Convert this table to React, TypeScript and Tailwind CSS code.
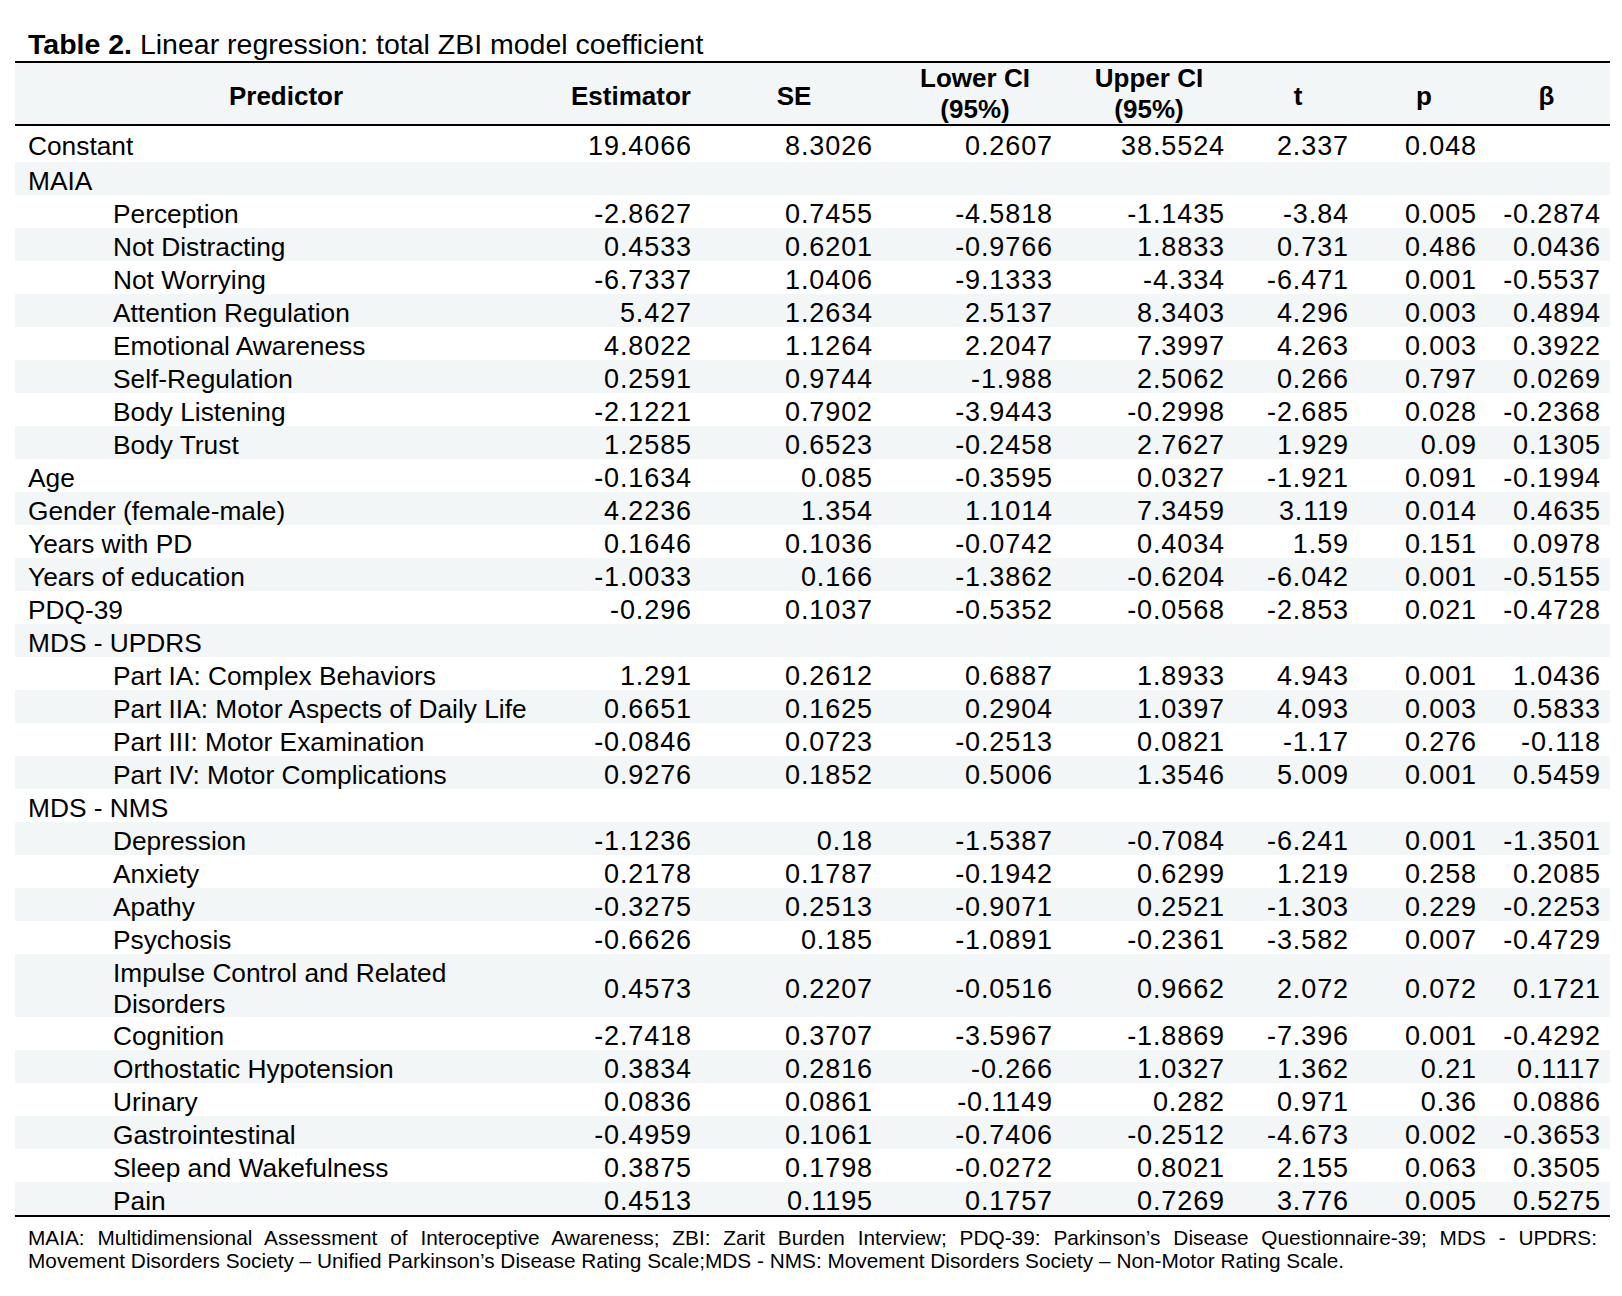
const cols = "grid grid-cols-[542px_148px_178px_184px_164px_134px_118px_127px]"

// right padding per numeric column, so numbers land where the original has them
const pads = ["pr-[13px]", "pr-[10px]", "pr-[14px]", "pr-[6px]", "pr-[16px]", "pr-[6px]", "pr-[9px]"]

type Row = {
  label: string
  indent?: boolean
  values?: string[]
  tall?: boolean
}

const rows: Row[] = [
  { label: "Constant", values: ["19.4066", "8.3026", "0.2607", "38.5524", "2.337", "0.048", ""] },
  { label: "MAIA" },
  { label: "Perception", indent: true, values: ["-2.8627", "0.7455", "-4.5818", "-1.1435", "-3.84", "0.005", "-0.2874"] },
  { label: "Not Distracting", indent: true, values: ["0.4533", "0.6201", "-0.9766", "1.8833", "0.731", "0.486", "0.0436"] },
  { label: "Not Worrying", indent: true, values: ["-6.7337", "1.0406", "-9.1333", "-4.334", "-6.471", "0.001", "-0.5537"] },
  { label: "Attention Regulation", indent: true, values: ["5.427", "1.2634", "2.5137", "8.3403", "4.296", "0.003", "0.4894"] },
  { label: "Emotional Awareness", indent: true, values: ["4.8022", "1.1264", "2.2047", "7.3997", "4.263", "0.003", "0.3922"] },
  { label: "Self-Regulation", indent: true, values: ["0.2591", "0.9744", "-1.988", "2.5062", "0.266", "0.797", "0.0269"] },
  { label: "Body Listening", indent: true, values: ["-2.1221", "0.7902", "-3.9443", "-0.2998", "-2.685", "0.028", "-0.2368"] },
  { label: "Body Trust", indent: true, values: ["1.2585", "0.6523", "-0.2458", "2.7627", "1.929", "0.09", "0.1305"] },
  { label: "Age", values: ["-0.1634", "0.085", "-0.3595", "0.0327", "-1.921", "0.091", "-0.1994"] },
  { label: "Gender (female-male)", values: ["4.2236", "1.354", "1.1014", "7.3459", "3.119", "0.014", "0.4635"] },
  { label: "Years with PD", values: ["0.1646", "0.1036", "-0.0742", "0.4034", "1.59", "0.151", "0.0978"] },
  { label: "Years of education", values: ["-1.0033", "0.166", "-1.3862", "-0.6204", "-6.042", "0.001", "-0.5155"] },
  { label: "PDQ-39", values: ["-0.296", "0.1037", "-0.5352", "-0.0568", "-2.853", "0.021", "-0.4728"] },
  { label: "MDS - UPDRS" },
  { label: "Part IA: Complex Behaviors", indent: true, values: ["1.291", "0.2612", "0.6887", "1.8933", "4.943", "0.001", "1.0436"] },
  { label: "Part IIA: Motor Aspects of Daily Life", indent: true, values: ["0.6651", "0.1625", "0.2904", "1.0397", "4.093", "0.003", "0.5833"] },
  { label: "Part III: Motor Examination", indent: true, values: ["-0.0846", "0.0723", "-0.2513", "0.0821", "-1.17", "0.276", "-0.118"] },
  { label: "Part IV: Motor Complications", indent: true, values: ["0.9276", "0.1852", "0.5006", "1.3546", "5.009", "0.001", "0.5459"] },
  { label: "MDS - NMS" },
  { label: "Depression", indent: true, values: ["-1.1236", "0.18", "-1.5387", "-0.7084", "-6.241", "0.001", "-1.3501"] },
  { label: "Anxiety", indent: true, values: ["0.2178", "0.1787", "-0.1942", "0.6299", "1.219", "0.258", "0.2085"] },
  { label: "Apathy", indent: true, values: ["-0.3275", "0.2513", "-0.9071", "0.2521", "-1.303", "0.229", "-0.2253"] },
  { label: "Psychosis", indent: true, values: ["-0.6626", "0.185", "-1.0891", "-0.2361", "-3.582", "0.007", "-0.4729"] },
  { label: "Impulse Control and Related Disorders", indent: true, tall: true, values: ["0.4573", "0.2207", "-0.0516", "0.9662", "2.072", "0.072", "0.1721"] },
  { label: "Cognition", indent: true, values: ["-2.7418", "0.3707", "-3.5967", "-1.8869", "-7.396", "0.001", "-0.4292"] },
  { label: "Orthostatic Hypotension", indent: true, values: ["0.3834", "0.2816", "-0.266", "1.0327", "1.362", "0.21", "0.1117"] },
  { label: "Urinary", indent: true, values: ["0.0836", "0.0861", "-0.1149", "0.282", "0.971", "0.36", "0.0886"] },
  { label: "Gastrointestinal", indent: true, values: ["-0.4959", "0.1061", "-0.7406", "-0.2512", "-4.673", "0.002", "-0.3653"] },
  { label: "Sleep and Wakefulness", indent: true, values: ["0.3875", "0.1798", "-0.0272", "0.8021", "2.155", "0.063", "0.3505"] },
  { label: "Pain", indent: true, values: ["0.4513", "0.1195", "0.1757", "0.7269", "3.776", "0.005", "0.5275"] },
]

const headers = ["Estimator", "SE", "Lower CI\n(95%)", "Upper CI\n(95%)", "t", "p", "β"]

export default function App() {
  return (
    <div className="w-[1622px] h-[1296px] bg-white text-black px-[15px] pt-[28px] font-['Liberation_Sans',Arial,sans-serif]">
      <h2 className="pl-[13px] text-[28.5px] leading-[33px] whitespace-nowrap">
        <span className="font-bold">Table 2.</span> Linear regression: total ZBI model coefficient
      </h2>

      <div className="w-[1595px]">
        <div className={`${cols} h-[65px] items-center border-y-2 border-black bg-[#f3f6f6] font-bold text-[26px] leading-[31px]`}>
          <div className="text-center pt-[4px]">Predictor</div>
          {headers.map((h) => (
            <div key={h} className={`text-center whitespace-pre-line ${h.includes("\n") ? "" : "pt-[4px]"}`}>
              {h}
            </div>
          ))}
        </div>

        {rows.map((r, i) => (
          <div
            key={r.label}
            className={`${cols} items-center leading-[31px] ${
              r.tall ? "h-[63px]" : i === 0 ? "h-[36px]" : "h-[33px]"
            } ${i % 2 === 1 ? "bg-[#f3f6f6]" : ""}`}
          >
            <div className={`pt-[4px] text-[26.3px] ${r.indent ? "pl-[98px] pr-[10px]" : "pl-[13px]"}`}>{r.label}</div>
            {(r.values ?? ["", "", "", "", "", "", ""]).map((v, j) => (
              <div key={j} className={`text-right pt-[4px] text-[27px] tracking-[0.9px] ${pads[j]}`}>
                {v}
              </div>
            ))}
          </div>
        ))}

        <div className="border-t-2 border-black" />
      </div>

      <div className="pl-[13px] pr-[10px] pt-[9px] text-[20.8px] leading-[23px]">
        <p className="text-justify [text-align-last:justify]">
          MAIA: Multidimensional Assessment of Interoceptive Awareness; ZBI: Zarit Burden Interview; PDQ-39: Parkinson’s
          Disease Questionnaire-39; MDS - UPDRS:
        </p>
        <p>
          Movement Disorders Society – Unified Parkinson’s Disease Rating Scale;MDS - NMS: Movement Disorders Society –
          Non-Motor Rating Scale.
        </p>
      </div>
    </div>
  )
}
